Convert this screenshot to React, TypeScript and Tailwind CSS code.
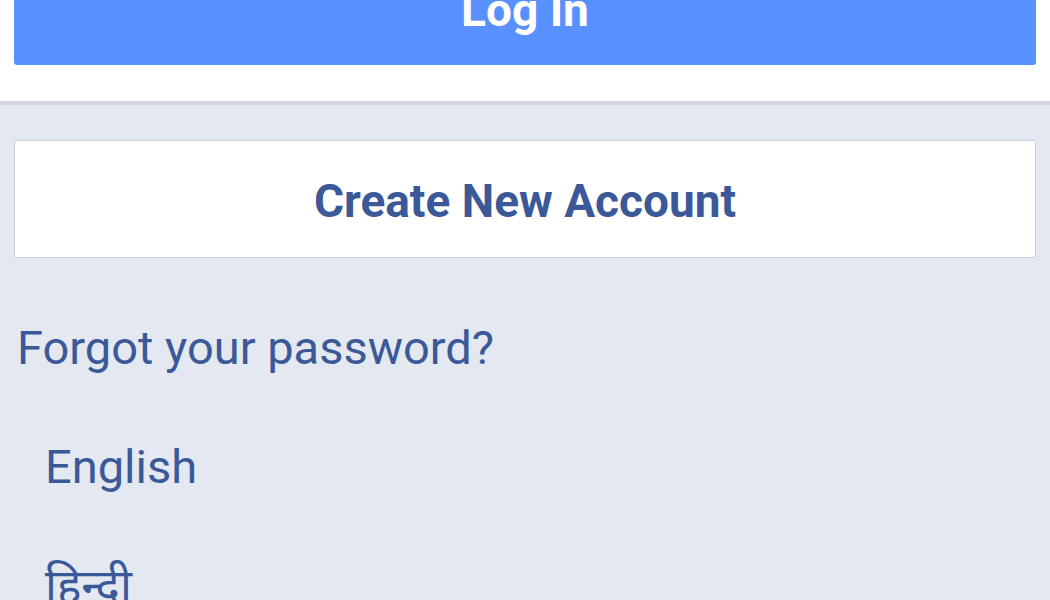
import React from "react";

export default function App() {
  return (
    <div className="w-[1050px] h-[600px] overflow-hidden bg-[#e4e8f0]" style={{ fontFamily: "Roboto, 'Noto Sans', sans-serif" }}>
      <div className="bg-white px-[14px] pb-[36px] border-b-[4px] border-[#d3d6e0]">
        <div className="mt-[-46px] h-[111px] rounded-[3px] bg-[#5890ff] flex items-center justify-center">
          <span className="text-white font-bold text-[46px] leading-none">Log In</span>
        </div>
      </div>
      <div className="px-[14px] pt-[35px]">
        <div className="h-[118px] pt-[4px] bg-white border border-[#c9cfe0] rounded-[2px] flex items-center justify-center">
          <span className="text-[#3b5998] font-bold text-[46px] leading-none">Create New Account</span>
        </div>
      </div>
      <div className="pl-[17px] pt-[66px] text-[#3b5998] text-[47px] leading-none">Forgot your password?</div>
      <div className="pl-[45px] pt-[72px] text-[#3b5998] text-[47px] leading-none">English</div>
      <div className="pl-[45px] pt-[73px] text-[#3b5998] text-[46px] leading-none" style={{ fontFamily: "Roboto, 'Noto Sans', 'DejaVu Sans', sans-serif" }}>हिन्दी</div>
    </div>
  );
}
